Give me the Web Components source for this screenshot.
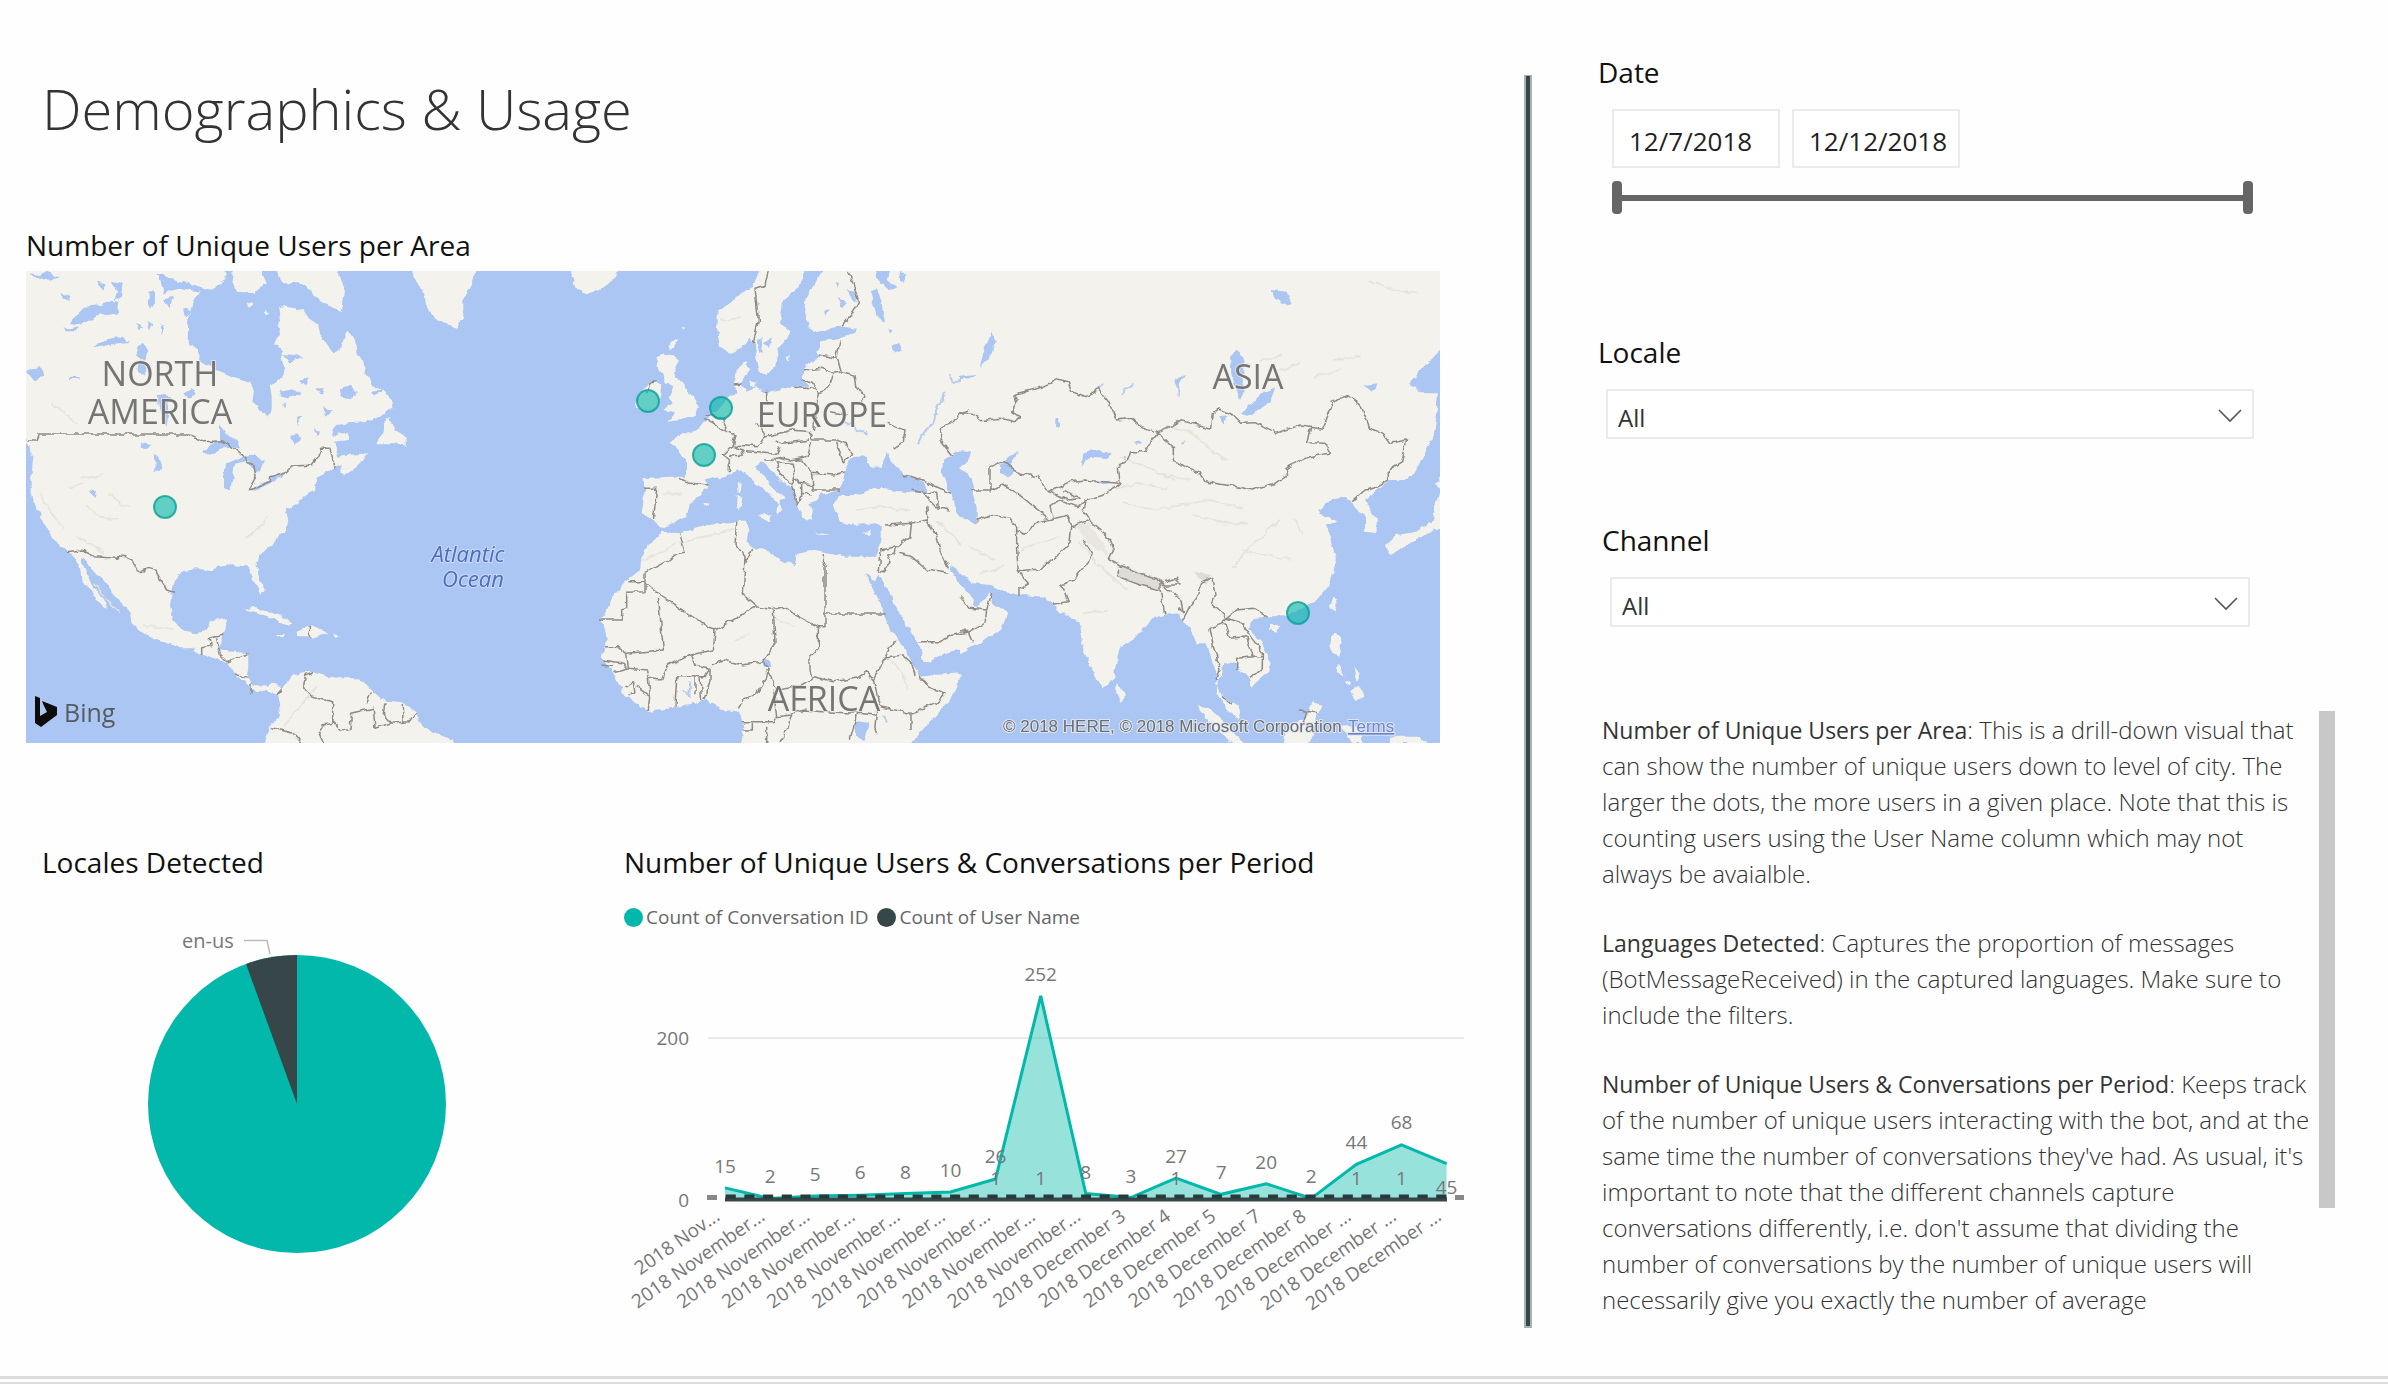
<!DOCTYPE html>
<html lang="en">
<head>
<meta charset="utf-8">
<title>Demographics &amp; Usage</title>
<style>
  body { margin: 0; background: #fefefe; color: #111; font-family: "Open Sans", "Noto Sans", sans-serif; }
</style>
</head>
<body>
<report-page>
  <h1 slot="title">Demographics &amp; Usage</h1>
  <report-panel slot="map" heading="Number of Unique Users per Area"><user-map></user-map></report-panel>
  <report-panel slot="pie" heading="Locales Detected" inset><locale-pie></locale-pie></report-panel>
  <report-panel slot="chart" heading="Number of Unique Users &amp; Conversations per Period"><period-chart></period-chart></report-panel>
  <date-filter slot="filters" label="Date" from="12/7/2018" to="12/12/2018"></date-filter>
  <select-filter slot="filters" label="Locale"></select-filter>
  <select-filter slot="filters" label="Channel" narrow></select-filter>
  <note-list slot="filters">
    <note-item heading="Number of Unique Users per Area">: This is a drill-down visual that<br>can show the number of unique users down to level of city. The<br>larger the dots, the more users in a given place. Note that this is<br>counting users using the User Name column which may not<br>always be avaialble.</note-item>
    <note-item heading="Languages Detected">: Captures the proportion of messages<br>(BotMessageReceived) in the captured languages. Make sure to<br>include the filters.</note-item>
    <note-item heading="Number of Unique Users &amp; Conversations per Period">: Keeps track<br>of the number of unique users interacting with the bot, and at the<br>same time the number of conversations they've had. As usual, it's<br>important to note that the different channels capture<br>conversations differently, i.e. don't assume that dividing the<br>number of conversations by the number of unique users will<br>necessarily give you exactly the number of average</note-item>
  </note-list>
</report-page>

<template id="t-page">
<style>
  :host { display: block; }
  .report { display: grid; grid-template-columns: 1524fr 8px 856fr; min-height: calc(100vh - 8px); box-sizing: border-box; padding-bottom: 48px; }
  main { min-width: 0; padding: 68px 0 0 26px; }
  .rule { margin-top: 75px; background: #374649; border: 2px solid #aab1b3; border-top-width: 1px; }
  aside { min-width: 0; padding: 52px 0 0 66px; }
  ::slotted(h1) { margin: 0 0 77px 16px; font-size: 56px; line-height: 80px; font-weight: 300; color: #333; white-space: nowrap; }
  .map { padding-right: 84px; }
  .row { display: grid; grid-template-columns: 598fr 900fr; margin-top: 99px; }
  footer { height: 3px; border-top: 3px solid #dcdcdc; border-bottom: 2px solid #dcdcdc; }
</style>
<div class="report">
  <main>
    <slot name="title"></slot>
    <div class="map"><slot name="map"></slot></div>
    <div class="row"><slot name="pie"></slot><slot name="chart"></slot></div>
  </main>
  <div class="rule"></div>
  <aside><slot name="filters"></slot></aside>
</div>
<footer></footer>
</template>

<template id="t-panel">
<style>
  :host { display: block; min-width: 0; }
  h2 { margin: 0 0 6px; font-size: 28px; line-height: 40px; font-weight: 400; color: #111; white-space: nowrap; }
  :host([inset]) h2 { padding-left: 16px; }
</style>
<h2></h2><slot></slot>
</template>

<template id="t-date">
<style>
  :host { display: block; margin-right: 135px; }
  .label { font-size: 28px; line-height: 40px; }
  .boxes { display: flex; gap: 12px; margin: 17px 0 13px 14px; }
  input[type=text] { width: 168px; height: 59px; box-sizing: border-box; border: 2px solid #ebebeb; padding: 4px 0 0 15px; background: #fff; font: 26px "Open Sans", sans-serif; color: #222; }
  .slider { display: grid; height: 33px; margin-left: 14px; background: linear-gradient(#666, #666) center / 100% 6px no-repeat; }
  input[type=range] { grid-area: 1 / 1; width: 100%; height: 33px; margin: 0; appearance: none; -webkit-appearance: none; background: none; pointer-events: none; }
  input[type=range]::-webkit-slider-thumb { -webkit-appearance: none; width: 10px; height: 33px; border-radius: 4px; background: #666; pointer-events: auto; }
</style>
<div class="label" id="l"></div>
<div class="boxes">
  <input type="text" id="from" aria-label="Start date">
  <input type="text" id="to" aria-label="End date">
</div>
<div class="slider">
  <input type="range" min="0" max="100" value="0" aria-label="Range start">
  <input type="range" min="0" max="100" value="100" aria-label="Range end">
</div>
</template>

<template id="t-select">
<style>
  :host { display: block; margin: 81px 134px 0 0; }
  :host(:not([narrow])) { margin-top: 118px; }
  :host([narrow]) { margin-left: 4px; margin-right: 138px; }
  label { display: block; font-size: 28px; line-height: 40px; margin-bottom: 17px; }
  .box { display: grid; margin-left: 8px; align-items: center; }
  select { grid-area: 1 / 1; width: 100%; height: 50px; box-sizing: border-box; appearance: none; -webkit-appearance: none; border: 2px solid #ebebeb; border-radius: 0; background: #fff; padding: 6px 10px 0; font: 24px "Open Sans", sans-serif; color: #333; }
  svg { grid-area: 1 / 1; justify-self: end; margin: 4px 11px 0 0; pointer-events: none; }
</style>
<label for="s"></label>
<div class="box">
  <select id="s"><option>All</option></select>
  <svg width="26" height="16" viewBox="0 0 26 16" fill="none" stroke="#555" stroke-width="1.6"><path d="M2 2 13 13 24 2"/></svg>
</div>
</template>

<template id="t-notes">
<style>
  :host { display: grid; grid-template-columns: 1fr 16px; margin: 84px 53px 0 4px; }
  .text { display: grid; gap: 33px; min-width: 0; padding-top: 1px; font-size: 24px; line-height: 36px; font-weight: 300; color: #333; white-space: nowrap; }
  .thumb { width: 16px; height: 497px; background: #c8c8c8; }
</style>
<div class="text"><slot></slot></div>
<div class="thumb"></div>
</template>

<template id="t-note">
<style>
  :host { display: block; }
  p { margin: 0; }
  b { font-size: 23px; font-weight: 400; }
</style>
<p><b></b><slot></slot></p>
</template>

<template id="t-pie">
<style>
  :host { display: block; }
  svg { display: block; width: 100%; }
  text { font-size: 20px; fill: #777; }
</style>
<svg viewBox="26 888 598 396">
  <circle cx="297" cy="1104" r="149" fill="#01b8aa"/>
  <path d="M297 1104 246 964A149 149 0 0 1 297 955Z" fill="#374649"/>
  <path d="M244 940.500H267L270 954" fill="none" stroke="#bbb" stroke-width="1.500"/>
  <text x="182" y="948">en-us</text>
</svg>
</template>

<template id="t-chart">
<style>
  :host { display: block; }
  .legend { display: flex; gap: 9px; margin-top: 21px; line-height: 28px; font-size: 19px; color: #666; }
  .legend span { display: flex; align-items: center; gap: 3px; white-space: nowrap; }
  .legend i { width: 19px; height: 19px; border-radius: 50%; background: #01b8aa; }
  .legend .dark i { background: #374649; }
  svg { display: block; width: 100%; }
  text { font-size: 19px; fill: #777; }
</style>
<div class="legend"><span><i></i>Count of Conversation ID</span><span class="dark"><i></i>Count of User Name</span></div>
<svg viewBox="624 931 900 390"></svg>
</template>

<template id="t-map">
<style>
  :host { display: block; }
  svg { display: block; width: 100%; }
  .land { fill: #f3f2ec; }
  .sea { fill: #abc6f2; }
  .bd { fill: none; stroke: #8f8a85; stroke-width: 4.500; stroke-linejoin: round; }
  .rv { fill: none; stroke: #b5cbef; stroke-width: 6; stroke-linecap: round; stroke-linejoin: round; }
  .rl { fill: none; stroke: #e6e3da; stroke-width: 5; stroke-linecap: round; stroke-linejoin: round; }
  .big { font-size: 34px; fill: #757575; text-anchor: middle; paint-order: stroke; stroke: #f3f2ec; stroke-width: 2px; stroke-opacity: .6; }
  .ocean { font-size: 22px; font-style: italic; fill: #4f6dba; text-anchor: middle; paint-order: stroke; stroke: #c9dafa; stroke-width: 2px; }
  .pin circle { fill: #01b8aa; fill-opacity: .6; stroke: #019c91; stroke-opacity: .75; stroke-width: 2; }
  .copy { font: 17px "Liberation Sans", Arial, sans-serif; fill: #6a6e74; paint-order: stroke; stroke: #dfe5ee; stroke-width: 2px; }
  .copy a { fill: #6f86cc; text-decoration: underline; }
</style>
<svg viewBox="26 271 1414 472">
  <defs>
    <filter id="coast" x="0" y="0" width="100%" height="100%"><feTurbulence type="fractalNoise" baseFrequency=".12" numOctaves="2" seed="4"/><feDisplacementMap in="SourceGraphic" scale="6" xChannelSelector="R" yChannelSelector="G"/></filter>
  </defs>
  <rect class="sea" x="26" y="271" width="1414" height="472"/>
  <g filter="url(#coast)">
  <!-- The Americas -->
  <g transform="translate(20 260) scale(.333333)">
    <path class="land" d="M0 10H610L620 60 575 85 545 90 520 125 505 170 503 255 530 270 540 300 590 330 640 350 690 365 705 390 700 430 720 450 745 470 755 450 755 405 750 380 790 350 795 320 780 300 790 275 765 250 780 220 770 195 780 180 775 145 800 140 850 150 870 180 895 195 900 225 925 260 940 280 965 265 970 240 985 215 1005 240 1010 280 1030 300 1035 340 1055 375 1095 390 1115 420 1120 440 1080 470 1050 485 990 490 950 495 935 525 980 515 985 540 940 545 955 590 985 585 1045 580 1020 610 975 645 960 640 965 615 940 625 890 650 885 690 855 705 830 730 815 745 795 740 805 780 800 810 770 840 720 885 710 910 715 940 735 990 725 1005 700 960 685 920 640 915 590 920 580 935 530 925 490 930 465 960 455 1000 450 1040 460 1080 490 1115 530 1120 560 1110 570 1085 625 1075 620 1095 605 1125 605 1150 590 1170 640 1175 685 1180 685 1220 680 1255 700 1275 730 1280 765 1268 785 1290 800 1270 820 1245 850 1240 870 1232 905 1245 960 1255 1020 1255 1055 1290 1100 1325 1150 1330 1190 1355 1200 1395 1240 1420 1290 1435 1320 1480H725L750 1400 780 1370 775 1310 740 1290 710 1300 690 1280 650 1245 620 1210 580 1190 540 1185 520 1165 480 1165 430 1145 370 1120 335 1090 330 1060 290 1010 250 960 215 930 190 890 185 905 200 940 215 975 245 1010 262 1045 235 1025 215 990 185 965 180 920 165 895 140 870 95 830 70 780 50 750 35 700 35 640 40 590 20 540 0 530Z"/>
    <path class="land" d="M640 20 710 20 740 70 700 100 650 95 635 60ZM760 10H945L975 90 965 160 900 120 850 70 790 70ZM1180 10 1375 10 1350 80 1330 120 1330 170 1310 205 1250 180 1220 140 1210 90 1180 50ZM1110 470 1125 510 1160 530 1160 560 1120 550 1070 550 1090 520 1095 480ZM670 1050 700 1043 760 1055 820 1088 800 1098 750 1070ZM830 1115 870 1098 925 1118 890 1130 830 1128ZM765 1122 795 1122 790 1132ZM940 1122 962 1128 945 1134ZM680 125 700 130 688 143ZM735 145 745 160 735 163Z"/>
    <path class="sea" d="M150 185 175 160 195 140 240 135 275 122 295 125 290 160 260 165 240 160 210 185 160 195ZM120 95 150 110 150 125 130 115ZM25 40 60 45 80 35 120 50 60 60ZM230 65 260 70 250 90ZM275 65 305 72 300 110 282 120 292 95ZM385 95 405 90 405 140 388 145ZM345 190 370 200 352 210ZM380 180 400 190 390 215ZM425 190 435 200 428 230ZM225 265 250 240 290 232 330 245 280 252ZM355 260 375 245 385 275 370 305 352 285ZM490 145 512 150 495 178ZM410 40 470 60 540 80 560 98 480 85 430 100ZM425 120 460 110 450 145ZM20 335 60 320 75 345 40 360ZM130 202 150 208 180 202 170 214 140 214ZM150 350 180 352 175 358 150 356ZM410 400 450 410 440 500 420 460ZM490 400 515 385 525 405 505 420ZM360 300 380 320 370 350 355 330ZM550 575 570 550 600 540 600 500 620 525 650 540 660 565 620 560 590 575 560 585ZM625 690 612 680 612 630 625 605 650 595 690 590 670 605 645 612 638 650 632 690ZM670 590 700 585 735 600 720 625 710 640 690 620 690 600ZM685 690 710 675 750 660 750 650 795 640 780 655 740 675 700 692ZM960 385 990 375 1012 395 990 418 962 412ZM780 395 820 388 850 400 800 412 775 405ZM790 285 850 290 810 305ZM840 365 865 355 860 378 845 375ZM880 385 912 385 905 398ZM910 440 935 455 915 470ZM810 530 830 520 845 540 820 552ZM885 505 900 515 890 530ZM835 470 848 465 832 500ZM790 435 800 430 792 445ZM1050 400 1100 380 1065 410ZM205 690 230 695 228 712ZM360 548 395 555 370 570ZM405 585 415 590 425 632 400 632 407 620Z"/>
    <path class="rl" d="M60 700 95 760 130 805M180 650 230 655 250 640M200 740 240 770 290 780M680 830 720 800 745 770M225 970 260 1020 300 1060M370 1095 460 1110M790 1400 850 1330 890 1280M100 430 170 490M150 680 190 670M270 700 300 730 330 740M170 830 230 860 250 880"/>
  </g>
  <!-- Europe and Africa -->
  <g transform="translate(490 260) scale(.333333)">
    <path class="land" d="M815 10 790 80 750 100 720 130 680 155 680 200 690 260 720 278 755 265 780 230 795 260 800 300 810 335 830 345 855 320 865 270 900 220 870 190 880 120 930 80 950 10Z"/>
    <path class="land" d="M1010 10 975 70 950 115 945 160 960 205 990 215 1050 200 1100 210 1075 225 1040 235 990 245 985 280 1000 290 960 305 940 330 935 360 960 380 900 380 830 400 800 385 765 395 752 370 775 330 765 305 740 330 735 370 745 400 720 405 690 440 650 475 625 510 600 520 580 520 535 545 560 560 585 600 585 650 540 650 460 655 465 690 455 760 490 785 510 800 545 795 590 770 600 735 655 680 645 660 720 645 745 625 775 650 810 680 840 705 865 735 860 770 875 745 865 720 890 715 850 685 820 650 795 620 810 600 840 625 870 660 910 690 920 735 945 780 965 785 970 760 955 730 985 720 990 705 1050 690 1060 660 1065 625 1090 590 1130 590 1145 620 1175 620 1190 575 1200 600 1215 620 1240 640 1300 665 1320 700 1265 698 1200 690 1150 685 1100 705 1040 705 1030 740 1050 785 1090 795 1160 790 1175 800 1175 840 1155 890 1120 890 1060 890 1010 880 960 870 920 880 915 915 870 900 830 870 790 865 770 850 775 805 765 785 740 785 680 790 620 805 570 820 515 815 480 850 455 890 450 930 400 970 370 1010 350 1050 335 1080 350 1140 335 1190 370 1240 400 1300 450 1340 485 1355 560 1340 600 1335 650 1320 700 1350 750 1355 760 1400 750 1480H1235L1300 1410 1380 1320 1415 1240 1330 1245 1290 1250 1270 1215 1240 1160 1200 1110 1180 1050 1150 990 1125 935 1155 965 1165 940 1200 1000 1240 1080 1290 1160 1300 1210 1350 1190 1450 1150V1020L1400 960 1380 920 1400 930 1450 970V790L1400 760 1380 700 1355 640 1360 600 1400 575 1450 570V10Z"/>
    <path class="land" d="M245 50 250 10H400L370 60 330 90 300 102 260 90ZM500 290 540 280 570 300 550 340 575 360 600 400 628 440 610 470 570 480 535 485 555 460 520 450 545 430 535 410 550 380 525 370 520 340 500 320ZM480 365 510 370 515 390 505 440 460 455 440 440 450 400ZM740 665 755 670 752 695 743 695ZM740 705 758 712 750 748 738 742ZM805 768 845 762 840 788ZM975 818 1025 825 980 824ZM1120 822 1145 808 1135 825ZM640 730 655 735 645 742ZM780 360 800 365 795 385 780 380ZM540 265 548 240 562 238 548 268ZM575 200 590 203 580 210ZM890 290 900 288 895 305Z"/>
    <path class="sea" d="M1140 90 1160 85 1175 130 1185 190 1160 170 1150 130ZM1155 33H1200L1190 60 1220 85 1200 90 1165 60ZM1225 33 1250 45 1240 70ZM1205 260 1225 250 1235 272 1215 280ZM1195 205 1212 212 1200 220ZM1070 90 1095 95 1100 125 1085 115ZM1040 110 1070 130 1055 145ZM1005 150 1018 148 1008 172ZM1035 65 1048 70 1040 85ZM800 240 815 235 818 275 808 280ZM820 250 845 235 840 260ZM815 1195 840 1200 845 1225 825 1220ZM1095 1380 1140 1385 1120 1440 1095 1430Z"/>
    <path class="rv" d="M1380 345 1390 370 1440 350M1365 400 1340 450 1330 490 1300 520 1285 550M1060 475 1100 510 1130 520M600 1270 598 1310 580 1290M1180 1370 1190 1385"/>
    <path class="rl" d="M570 850 640 830 730 810M460 900 530 870 560 850M1100 750 1180 740 1260 750M1200 1200 1240 1240 1250 1290M520 700 570 700M690 180 750 175M860 1080 910 1100M1340 780 1440 880M740 1140 780 1120"/>
  </g>
  <!-- Asia -->
  <g transform="translate(960 260) scale(.333333)">
    <path class="land" d="M0 10H1470V250L1400 310 1350 370 1380 400 1430 400 1435 440 1420 530 1390 590 1345 660 1290 660 1250 690 1215 720 1250 780 1250 820 1215 815 1215 770 1190 750 1180 725 1140 710 1110 720 1075 750 1090 770 1130 780 1100 800 1115 850 1130 900 1110 970 1070 1020 1020 1050 980 1065 920 1070 880 1075 865 1105 900 1140 930 1200 925 1235 875 1280 865 1255 825 1215 790 1205 785 1250 765 1270 790 1310 835 1340 840 1380 800 1350 770 1300 775 1250 755 1200 740 1150 710 1150 690 1105 670 1080 660 1060 610 1065 580 1075 540 1120 480 1160 470 1200 460 1260 430 1285 400 1240 370 1170 355 1080 330 1075 275 1035 255 1010 180 1005 130 995 90 975 40 970 0 925V790H50V740L35 690 40 660 0 620 30 600 35 578 0 572Z"/>
    <path class="land" d="M0 1000 50 1045 90 1000 100 1030 145 1060 120 1110 60 1150 0 1180ZM470 1270 490 1285 495 1315 478 1325 468 1300ZM1120 1010 1135 1015 1120 1055 1110 1040ZM930 1095 955 1095 950 1118 930 1112ZM1115 1130 1130 1120 1145 1145 1135 1190 1115 1180 1108 1150ZM1440 700 1460 700 1460 800 1400 820 1350 850 1290 885 1275 860 1310 825 1370 815 1420 780 1425 730ZM1460 630V700L1425 675ZM710 1335 750 1345 800 1390 850 1449H820L760 1400ZM1000 1390 1040 1370 1060 1325 1085 1335 1070 1360 1050 1449H975L980 1400ZM1170 1295 1200 1280 1210 1310 1190 1320ZM1130 1215 1145 1220 1150 1250 1135 1240ZM1180 1220 1200 1245 1190 1265ZM1155 1265 1175 1260 1165 1280ZM1140 1400 1200 1395 1210 1449H1180ZM1290 1430 1380 1430 1400 1449H1290Z"/>
    <path class="sea" d="M935 90 980 95 995 130 970 135 945 115ZM810 290 830 272 850 290 850 400 840 420 832 395 815 350ZM845 460 880 425 920 395 945 385 930 425 890 455 860 468ZM80 250 95 215 105 250 85 300 60 320 70 280ZM0 350 50 345 30 358 0 360ZM120 615 145 590 178 575 155 605 160 640 145 655 120 635ZM365 620 370 580 395 568 455 580 445 595 395 590 380 600ZM400 665 450 662 440 676ZM290 475 298 475 296 505 288 500ZM1210 375 1255 370 1235 398ZM640 360 675 345 660 370 655 410 650 380ZM520 545 545 545 530 558ZM660 545 680 545 665 555ZM780 470 800 465 790 498ZM490 590 500 585 500 610Z"/>
    <path class="rv" d="M485 400 515 372M415 385 435 370"/>
    <path class="rl" d="M480 590 560 620 640 660M450 690 540 670 620 685M490 730 590 750 690 730 750 720 850 745M700 765 790 790 860 790M820 920 880 850 960 780M850 870 990 900M620 500 700 520 740 560 800 600M1230 65 1300 90 1370 100M1000 780 1030 820M30 860 100 900M180 870 240 850 300 830M360 850 430 930 500 990M590 640 690 660M960 330 1020 310M1120 300 1200 290M1060 350 1140 330M60 940 130 920M900 300 960 290M370 1060 440 1050"/>
    <path d="M470 930 490 915 605 960 600 990 520 970 480 950ZM700 935 750 945 740 975Z" fill="#dedcd5"/>
    <path d="M345 795 385 790 430 850 445 890 400 860 370 830Z" fill="#e8e6df"/>
  </g>
  <!-- National borders -->
  <g class="bd">
    <path transform="translate(20 260) scale(.333333)" d="M25 540 48 540 55 522H500L520 530 550 545 605 542 630 555 670 590 700 615 708 650 685 690 750 665 752 650 795 640 815 618 875 616 895 590 905 565H930L945 625M140 875 185 870 225 890 290 895 295 888 320 890 365 935 385 925 405 930 440 990 465 997M545 1188 545 1165 570 1158 568 1135 610 1125M590 1135 600 1185 620 1205 685 1180M645 1240 680 1255M693 1270 693 1300M770 1308 785 1290M868 1098V1130M880 1235 855 1245 848 1275 870 1310 938 1325V1385L965 1410 990 1405 995 1360 1060 1345 1065 1405 1110 1390 1170 1385 1190 1355M1055 1295 1040 1330M1095 1330 1090 1360 1115 1390M1150 1335 1152 1385M938 1390 905 1395 895 1415 910 1449M755 1403 820 1420 845 1449"/>
    <path transform="translate(490 260) scale(.333333)" d="M835 33 825 75 795 85 805 180 790 250M1075 33 1090 70 1105 125 1085 165 1055 200M990 285 1040 295 1050 240M940 330 1000 325 1030 340 1055 335 1040 295M1030 345 1015 385 985 395 970 370 935 360M910 382 975 388M1055 335 1095 345 1100 380 1125 410 1110 425M985 395 980 450 970 510M830 395V430M735 375 755 372M470 400 480 370 500 365M640 475 710 515 735 525 725 560 700 585 715 595V640M650 465 700 475 710 515M800 490 825 530 870 520 905 510 960 515 970 540M825 530 805 560 730 555M860 540 880 550 960 540M730 560 760 570 745 590 720 585M765 572 860 580 870 560M860 590 900 600 950 590 965 550M970 540 1040 540 1065 550 1085 580 1060 610 1040 545M820 600 850 600 860 590M855 605 910 610 915 650 905 675 870 640ZM915 600 935 600 965 640 1030 645 1065 635M965 640 970 690 1050 690M915 655 930 670 970 675M935 670 935 710 920 735 905 680M935 700 965 705M1190 490 1245 510 1240 545 1210 565M570 655 600 670 655 675M460 685 500 685 490 780M1240 645 1300 660 1380 700M1265 690 1300 700 1340 740 1380 750M1300 700 1340 700 1345 740M1310 740 1315 785M1185 795 1265 790 1310 780 1340 830 1350 870 1375 925M1265 790 1260 830 1220 860 1170 870M1220 860 1215 880 1190 885 1200 910 1180 935 1160 930M1170 870 1165 930M1225 880 1265 890 1310 930 1375 940M1440 450 1410 460 1390 485 1355 500 1350 540 1385 585M570 820 585 880 555 885 530 905 465 940V970M415 965H465V995L410 997V1045L395 1050V1080H330M465 970 510 1005 660 1105 675 1110 800 1040M740 785 735 850 765 890 760 1005 800 1040 850 1050M765 910 785 870M1000 885V910L1005 920V1100H985L985 1165 960 1190 960 1230 965 1250M1005 1062H1190M850 1045 870 1040 985 1100M850 1050 855 1150 820 1200 835 1225 830 1255 800 1300 760 1320 745 1345M505 1010 520 1170 410 1180 380 1160 345 1160M675 1110 670 1170 600 1185 530 1220 515 1260 475 1255 470 1230 415 1225 410 1180M340 1200 400 1210 410 1225 370 1235M335 1215 370 1220M605 1185 615 1215 660 1225 645 1250 560 1250 555 1340M615 1250V1300M630 1250 635 1325M660 1225V1260L645 1320M660 1215 700 1200 760 1215 820 1205M475 1255 480 1300 475 1350M400 1280 430 1265 435 1300 415 1305M440 1280 480 1310M830 1230 860 1290 930 1280 970 1250 1030 1265 1100 1255 1130 1235 1150 1260 1160 1240 1190 1180 1215 1140M1190 1190 1240 1185 1265 1210 1275 1245M1290 1250 1320 1285 1370 1300M1365 1300 1340 1330 1260 1360 1170 1340 1150 1260M1260 1360V1410M1160 1350 1155 1400 1160 1420M1100 1360 1160 1365M1100 1360 1080 1440M755 1385H850L860 1370 905 1365 890 1410 870 1449M760 1410H790V1390M830 1400 830 1449M850 1290 860 1370M905 1360 940 1350 1000 1355 1100 1360M1285 1145 1350 1145 1390 1125 1440 1115M1020 455 1070 465"/>
    <path transform="translate(960 260) scale(.333333)" d="M0 458 40 460 65 482 120 475 165 485 178 470 155 455 170 430 165 405 180 398 250 380 295 358 325 365 335 395 375 410 415 385 445 425 470 480 515 475 545 500 595 518 635 500 665 482 755 505 760 460 775 447 820 465 845 490 885 488 950 520 1020 495 1060 500 1090 505 1115 440 1110 425 1165 405 1200 430 1230 505 1270 520 1290 550 1340 540 1325 605 1285 630V660L1240 685 1215 690 1180 722M595 518 570 550 555 575 515 575 505 605 475 620 480 670 430 705 375 720 370 750 390 785 440 825 460 870 445 895 480 915 540 940 600 960 600 990 540 975 475 950 475 920M595 520 640 565V605L715 635 735 665 830 680 875 690 945 670 980 645 975 625 1050 590 1105 580 1095 550 1040 548 1052 500M90 695 90 620 130 605 180 640 235 650 265 695 330 665 375 660 475 670M30 690 90 690 130 675 185 710 265 775M50 780 90 765 150 775 170 800V870L175 935 205 970 180 985V1008M175 935 240 930 300 880 330 850 335 800 325 765 265 780 235 785 190 825 170 810M265 695 330 720 360 715 310 690M280 775 270 740 300 720M300 720 350 740 375 720M335 800 390 780M395 880 380 915 340 960 305 975 325 1025 275 1033M395 880 370 840M600 960 620 990 660 1010 670 1060 655 1040M610 975 660 975 650 955 615 965M600 990 615 1065M670 1080 690 1040 705 1020 725 970 755 955 765 1000 755 1030 800 1075 790 1090 750 1105 760 1160 780 1225 770 1260M800 1075 830 1050 880 1045 920 1070M800 1075 850 1090 865 1120 910 1180 910 1220 870 1255M795 1090 810 1135 860 1130 880 1190 830 1195 830 1230M880 1190H910M0 1010 30 1045 80 1050 95 1000M80 1050 75 1090 25 1115 0 1112M25 1115 40 1150M785 1310 815 1330M1015 1350 1070 1358M1040 1355 1025 1400"/>
  </g>
  </g>
  <g class="big">
    <text><tspan x="160" y="386">NORTH</tspan><tspan x="160" y="424">AMERICA</tspan></text>
    <text x="822" y="427">EUROPE</text><text x="1248" y="389">ASIA</text><text x="824" y="711">AFRICA</text>
  </g>
  <g class="ocean"><text><tspan x="468" y="562">Atlantic</tspan><tspan x="473" y="587">Ocean</tspan></text></g>
  <g class="pin"><circle cx="165" cy="507" r="11"/><circle cx="648" cy="401" r="11"/><circle cx="721" cy="408" r="11"/><circle cx="704" cy="455" r="11"/><circle cx="1298" cy="613" r="11"/></g>
  <path d="M35 696 40 698V716L47 712 44 706 42 701 57 707V715L41 727 35 723Z" fill="#0c0c0c"/>
  <text x="64" y="722" font-size="25" fill="#565b62">Bing</text>
  <g class="copy"><text x="1003" y="732">© 2018 HERE, © 2018 Microsoft Corporation</text><a href="#terms"><text x="1348" y="732">Terms</text></a></g>
</svg>
</template>

<script>
  class Base extends HTMLElement {
    connectedCallback() {
      if (this.shadowRoot) return;
      const root = this.attachShadow({ mode: 'open' });
      root.append(document.getElementById(this.constructor.tpl).content.cloneNode(true));
      this.fill(root);
    }
    fill() {}
  }
  customElements.define('report-page', class extends Base { static tpl = 't-page'; });
  customElements.define('note-list', class extends Base { static tpl = 't-notes'; });
  customElements.define('note-item', class extends Base {
    static tpl = 't-note';
    fill(root) { root.querySelector('b').textContent = this.getAttribute('heading'); }
  });
  customElements.define('user-map', class extends Base { static tpl = 't-map'; });
  customElements.define('locale-pie', class extends Base { static tpl = 't-pie'; });
  customElements.define('report-panel', class extends Base {
    static tpl = 't-panel';
    fill(root) { root.querySelector('h2').textContent = this.getAttribute('heading'); }
  });
  customElements.define('date-filter', class extends Base {
    static tpl = 't-date';
    fill(root) {
      root.getElementById('l').textContent = this.getAttribute('label');
      root.getElementById('from').value = this.getAttribute('from');
      root.getElementById('to').value = this.getAttribute('to');
    }
  });
  customElements.define('select-filter', class extends Base {
    static tpl = 't-select';
    fill(root) { root.querySelector('label').textContent = this.getAttribute('label'); }
  });
  customElements.define('period-chart', class extends Base {
    static tpl = 't-chart';
    fill(root) {
      // [label, conversations, y of the conversation label, whether the user count is labelled]
      const nov = '2018 November...', dec = '2018 December ...';
      const rows = [
        ['2018 Nov...', 15, 1166], [nov, 2, 1176], [nov, 5, 1174], [nov, 6, 1172], [nov, 8, 1172],
        [nov, 10, 1170], [nov, 26, 1156, 1], [nov, 252, 974, 1], [nov, 8, 1172],
        ['2018 December 3', 3, 1176], ['2018 December 4', 27, 1156, 1], ['2018 December 5', 7, 1172],
        ['2018 December 7', 20, 1162], ['2018 December 8', 2, 1176], [dec, 44, 1142, 1], [dec, 68, 1122, 1], [dec, 45, 1187]
      ];
      const X = i => 725 + i * 45.1, Y = v => 1200 - v * .81;
      const line = rows.map((r, i) => `${X(i)} ${Y(r[1])}`).join(' ');
      let s = `<path d="M708 1038H1464" stroke="#e9e9e9" stroke-width="2"/>
        <path d="M${X(0)} 1200 ${line} ${X(16)} 1200Z" fill="#01b8aa" fill-opacity=".4"/>
        <path d="M${line}" fill="none" stroke="#01b8aa" stroke-width="3"/>
        <path d="M707 1197.500H1464" stroke="#888" stroke-width="5" stroke-dasharray="10 8.700"/>
        <path d="M725 1199.500H1447" stroke="#374649" stroke-width="4"/>
        <path d="M725.700 1196.500H1447" stroke="#253b3c" stroke-width="4" stroke-dasharray="10 8.700"/>
        <text x="689" y="1045" text-anchor="end">200</text><text x="689" y="1207" text-anchor="end">0</text>`;
      rows.forEach((r, i) => {
        s += `<text x="${X(i)}" y="${r[2] + 7}" text-anchor="middle">${r[1]}</text>`;
        if (r[3]) s += `<text x="${X(i)}" y="1185" text-anchor="middle">1</text>`;
        s += `<text transform="translate(${X(i) - 4} 1219) rotate(-35)" text-anchor="end">${r[0]}</text>`;
      });
      root.querySelector('svg').innerHTML = s;
    }
  });
</script>
</body>
</html>
